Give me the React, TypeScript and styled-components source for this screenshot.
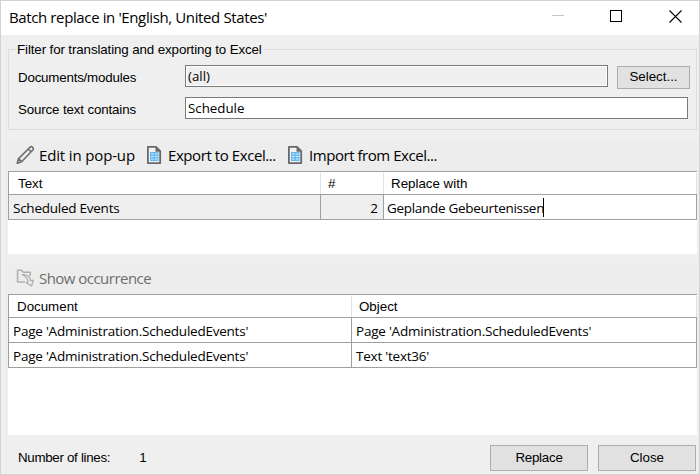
import React from "react";
import styled, { createGlobalStyle } from "styled-components";

const Global = createGlobalStyle`
  * { box-sizing: border-box; }
  html, body { margin: 0; overflow: hidden; }
  body { font: 13.33px/16px "Liberation Sans", Arial, sans-serif; color: #000; }
  button, input { font: inherit; color: inherit; margin: 0; }
`;

const Dialog = styled.div`
  width: 700px;
  height: 475px;
  display: flex;
  flex-direction: column;
  background: #efefef;
  border: 1px solid #d2d2d2;
`;

const TitleBar = styled.header`
  flex: 0 0 34px;
  display: flex;
  align-items: center;
  padding: 0 17px 2px 8px;
  background: #fff;
`;

const Label = styled.span<{ $size?: number; $track?: number }>`
  white-space: pre;
  font-size: ${(p) => p.$size ?? 13.33}px;
  letter-spacing: ${(p) => p.$track ?? 0}px;
`;

const UiLabel = styled(Label)`
  font-family: "Open Sans", "Noto Sans", sans-serif;
`;

const WindowControls = styled.div`
  margin-left: auto;
  padding-bottom: 2px;
  display: flex;
  align-items: center;
  gap: 46px;
  svg { display: block; }
  svg:last-child { margin-left: 1px; }
`;

const Body = styled.main`
  flex: 1;
  display: flex;
  flex-direction: column;
  padding: 5px 3px 3px 7px;
`;

const Group = styled.fieldset`
  margin: 0 0 10px;
  width: 689px;
  height: 90px;
  padding: 0 7px 0 9px;
  min-width: 0;
  border: 1px solid #dcdcdc;
`;

const Legend = styled.legend`
  height: 18px;
  line-height: 20px;
  margin-left: -2px;
  padding: 0 2px 0 1px;
`;

const Fields = styled.div`
  padding-top: 7px;
`;

const Field = styled.div`
  display: flex;
  height: 32px;
  align-items: flex-start;
`;

const FieldLabel = styled.label`
  flex: 0 0 167px;
  padding-top: 5px;
`;

const TextBox = styled.div<{ $width: number; $readOnly?: boolean }>`
  flex: 0 0 ${(p) => p.$width}px;
  height: 22px;
  padding: 0 2px;
  border: 1px solid #7a7a7a;
  background: ${(p) => (p.$readOnly ? "#efefef" : "#fff")};
  box-shadow: inset 0 0 0 1px #fff;
  line-height: 20px;
`;

const Button = styled.button<{ $width: number; $height: number }>`
  flex: 0 0 ${(p) => p.$width}px;
  height: ${(p) => p.$height}px;
  padding: 0 0 1px;
  border: 1px solid #adadad;
  border-radius: 0;
  background: #e1e1e1;
`;

const SelectButton = styled(Button)`
  margin: 1px 0 0 9px;
`;

const Toolbar = styled.div`
  flex: 0 0 31px;
  width: 689px;
  display: flex;
  align-items: center;
  padding-left: 8px;
  background: #ededed;
`;

const Tool = styled.div<{ $width: number; $gap?: number; $disabled?: boolean }>`
  width: ${(p) => p.$width}px;
  display: flex;
  align-items: center;
  color: ${(p) => (p.$disabled ? "#6d6d6d" : "#000")};
  svg { flex: none; margin: 0 ${(p) => p.$gap ?? 3}px 2px 0; }
  span { margin-bottom: 2px; }
`;

const GridPanel = styled.section<{ $height: number; $gap: number }>`
  width: 689px;
  flex: 0 0 ${(p) => p.$height}px;
  margin-bottom: ${(p) => p.$gap}px;
  background: #fff;
  border-top: 1px solid #a0a0a0;
`;

const Row = styled.div<{ $columns: string; $header?: boolean }>`
  display: grid;
  grid-template-columns: ${(p) => p.$columns};
  height: ${(p) => (p.$header ? 23 : 25)}px;
  border-left: 1px solid #a0a0a0;
  border-bottom: 1px solid #a0a0a0;
`;

const HeaderCell = styled.div<{ $inset?: number }>`
  padding: 3px 0 0 ${(p) => p.$inset ?? 8}px;
  margin-top: 1px;
  border-right: 1px solid #e2e2e2;
`;

const Cell = styled.div<{ $shaded?: boolean; $right?: boolean }>`
  display: flex;
  align-items: center;
  justify-content: ${(p) => (p.$right ? "flex-end" : "flex-start")};
  padding: 1px ${(p) => (p.$right ? 5 : 0)}px 0 4px;
  border-right: 1px solid #a0a0a0;
  background: ${(p) => (p.$shaded ? "#efefef" : "#fff")};
`;

const EditCell = styled(Cell)`
  padding-left: 3px;
`;

const Caret = styled.span`
  width: 1px;
  height: 19px;
  margin-left: -1px;
  background: #000;
`;

const Footer = styled.footer`
  display: flex;
  align-items: center;
  padding-left: 10px;
`;

const Count = styled.span`
  margin-left: 29px;
`;

const Actions = styled.div`
  margin-left: auto;
  display: flex;
  gap: 10px;
`;

const Pencil = () => (
  <svg width="20" height="20" viewBox="0 0 20 20" fill="none" stroke="#6e6e6e" strokeWidth="1.6" strokeLinejoin="round">
    <path d="M1.2 18.3 L2.6 13.6 L14 2.2 Q15.3 1 16.6 2.3 Q17.9 3.6 16.8 5 L5.6 16.7 Z M12.2 4 L15 6.8 M2.6 13.6 L5.6 16.7" />
  </svg>
);

const Sheet = () => (
  <svg width="18" height="20" viewBox="0 0 18 20" fill="none">
    <path d="M1.9 1.9 H10 L14.2 6.1 V18.1 H1.9 Z" fill="#f2f2f2" stroke="#686868" strokeWidth="1.8" strokeLinejoin="round" />
    <path d="M9.5 2 L14.2 6.7 H9.5 Z" fill="#686868" />
    <rect x="4" y="7" width="8.5" height="9" fill="#62b8ef" />
    <path d="M5 9 H7.5 M8.8 9 H11.5 M5 11.5 H7.5 M8.8 11.5 H11.5 M5 14 H7.5 M8.8 14 H11.5" stroke="#dff2ff" strokeWidth="1.2" />
  </svg>
);

const FolderArrow = () => (
  <svg width="20" height="20" viewBox="0 0 20 20" fill="none" stroke="#b0b0b0" strokeWidth="1.6" strokeLinejoin="round">
    <path d="M9 14 H1.6 V2.3 H5.6 L7.3 4.2 H14.2 V8" />
    <path d="M6.3 6.6 Q13.5 6 14.8 12.8 L17.3 12.2 L15.6 18 L10.2 14.6 L12.2 13.7 Q11.5 9 6.3 6.6 Z" fill="#ededed" strokeWidth="1.3" />
  </svg>
);

const columnsTop = "312px 63px 313px";
const columnsBottom = "343px 345px";

const occurrences = [
  { document: "Page 'Administration.ScheduledEvents'", object: "Page 'Administration.ScheduledEvents'" },
  { document: "Page 'Administration.ScheduledEvents'", object: "Text 'text36'" },
];

export default function App() {
  return (
    <>
      <Global />
      <Dialog>
        <TitleBar>
          <UiLabel $size={15} $track={-0.38}>Batch replace in 'English, United States'</UiLabel>
          <WindowControls>
            <svg width="12" height="12"><path d="M0 5.5H12" stroke="#c4c4c4" /></svg>
            <svg width="12" height="12"><rect x=".5" y=".5" width="11" height="11" fill="none" stroke="#000" /></svg>
            <svg width="13" height="13"><path d="M.5 .5L12.5 12.5M12.5 .5L.5 12.5" stroke="#000" strokeWidth="1.1" /></svg>
          </WindowControls>
        </TitleBar>
        <Body>
          <Group>
            <Legend><Label $track={-0.11}>Filter for translating and exporting to Excel</Label></Legend>
            <Fields>
              <Field>
                <FieldLabel><Label $track={-0.2}>Documents/modules</Label></FieldLabel>
                <TextBox $width={423} $readOnly><UiLabel $size={13.3}>(all)</UiLabel></TextBox>
                <SelectButton $width={73} $height={23}><Label>Select...</Label></SelectButton>
              </Field>
              <Field>
                <FieldLabel><Label $track={-0.14}>Source text contains</Label></FieldLabel>
                <TextBox $width={503}><UiLabel $size={13.3}>Schedule</UiLabel></TextBox>
              </Field>
            </Fields>
          </Group>
          <Toolbar>
            <Tool $width={130}><Pencil /><UiLabel $size={15} $track={-0.15}>Edit in pop-up</UiLabel></Tool>
            <Tool $width={141} $gap={4}><Sheet /><UiLabel $size={15} $track={-0.42}>Export to Excel...</UiLabel></Tool>
            <Tool $width={160} $gap={4}><Sheet /><UiLabel $size={15} $track={-0.45}>Import from Excel...</UiLabel></Tool>
          </Toolbar>
          <GridPanel $height={83} $gap={9}>
            <Row $columns={columnsTop} $header>
              <HeaderCell $inset={9}><Label>Text</Label></HeaderCell>
              <HeaderCell $inset={7}><Label>#</Label></HeaderCell>
              <HeaderCell $inset={7}><Label>Replace with</Label></HeaderCell>
            </Row>
            <Row $columns={columnsTop}>
              <Cell $shaded><UiLabel $size={13.5} $track={-0.25}>Scheduled Events</UiLabel></Cell>
              <Cell $shaded $right><UiLabel $size={13.5}>2</UiLabel></Cell>
              <EditCell><UiLabel $size={13.5} $track={-0.3}>Geplande Gebeurtenissen</UiLabel><Caret /></EditCell>
            </Row>
          </GridPanel>
          <Toolbar>
            <Tool $width={200} $disabled><FolderArrow /><UiLabel $size={15} $track={-0.53}>Show occurrence</UiLabel></Tool>
          </Toolbar>
          <GridPanel $height={141} $gap={10}>
            <Row $columns={columnsBottom} $header>
              <HeaderCell><Label>Document</Label></HeaderCell>
              <HeaderCell $inset={7}><Label>Object</Label></HeaderCell>
            </Row>
            {occurrences.map((o, i) => (
              <Row $columns={columnsBottom} key={i}>
                <Cell><UiLabel $size={13.5} $track={-0.23}>{o.document}</UiLabel></Cell>
                <Cell><UiLabel $size={13.5} $track={-0.23}>{o.object}</UiLabel></Cell>
              </Row>
            ))}
          </GridPanel>
          <Footer>
            <Label $track={-0.3}>Number of lines:</Label>
            <Count><Label>1</Label></Count>
            <Actions>
              <Button $width={98} $height={26}><Label $track={-0.25}>Replace</Label></Button>
              <Button $width={98} $height={26}><Label>Close</Label></Button>
            </Actions>
          </Footer>
        </Body>
      </Dialog>
    </>
  );
}
